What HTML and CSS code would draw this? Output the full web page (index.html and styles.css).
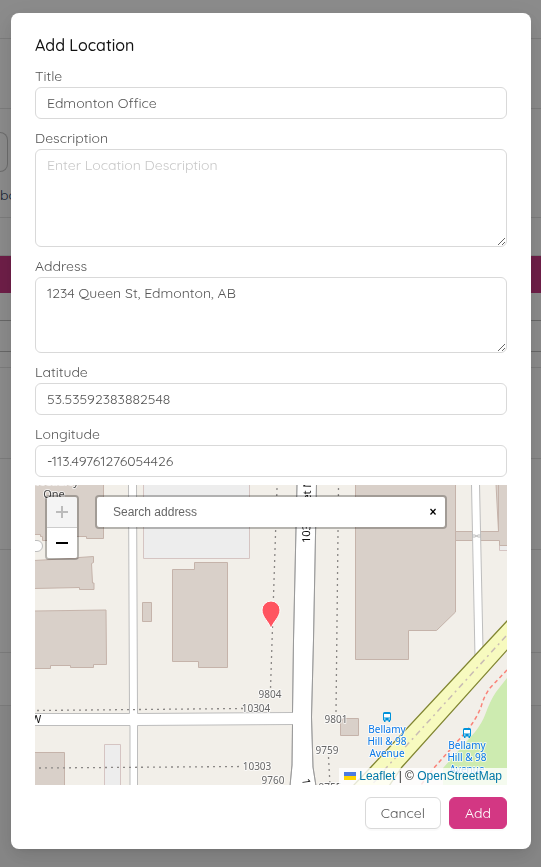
FILE: index.html
```html
<!DOCTYPE html>
<html lang="en">
<head>
<meta charset="utf-8">
<meta name="viewport" content="width=device-width, initial-scale=1">
<title>Add Location</title>
<link rel="stylesheet" href="styles.css">
</head>
<body>
<div class="page" aria-hidden="true">
  <div class="row row-header"></div>
  <div class="row row-toolbar"></div>
  <div class="row row-filter"><div class="page-box"></div><span class="page-link">bo</span></div>
  <div class="row row-gap"></div>
  <div class="row row-band"></div>
  <div class="row row-line"></div>
  <div class="row row-line"></div>
  <div class="row row-thin"></div>
  <div class="row row-item"></div>
  <div class="row row-item"></div>
  <div class="row row-tall"></div>
  <div class="row row-last"></div>
</div>
<div class="overlay">
  <form class="modal" role="dialog" aria-labelledby="heading">
    <h1 class="heading" id="heading">Add Location</h1>
    <div class="field">
      <label for="title">Title</label>
      <input class="control" id="title" type="text" value="Edmonton Office">
    </div>
    <div class="field">
      <label for="description">Description</label>
      <textarea class="control" id="description" rows="4" placeholder="Enter Location Description"></textarea>
    </div>
    <div class="field">
      <label for="address">Address</label>
      <textarea class="control" id="address" rows="3">1234 Queen St, Edmonton, AB</textarea>
    </div>
    <div class="field">
      <label for="latitude">Latitude</label>
      <input class="control" id="latitude" type="text" value="53.53592383882548">
    </div>
    <div class="field">
      <label for="longitude">Longitude</label>
      <input class="control" id="longitude" type="text" value="-113.49761276054426">
    </div>
    <div class="map">
      <svg class="tiles" viewBox="0 0 472 300" preserveAspectRatio="xMidYMid slice">
        <rect width="472" height="300" fill="#f2efe9"/>
        <path d="M408 300L408 283L418 272L440 247Q447 238 450 230Q455 216 461 207L472 193V300Z" fill="#cdebb0"/>
        <g fill="#ededed" stroke="#d5c4c2">
          <path d="M108.500-1V73.500H214.500V-1M69.500 301V259.500H85.500V301M464.500 60.500H473V65.500H464.500Z"/>
        </g>
        <g fill="#d9d0c9" stroke="#c5b3aa">
          <path d="M-1-1H68.500V53.500H51.500V51.500H30V55.500H7.500V51.500H5.500V49.500H-1Z"/>
          <path d="M-1 75.500L44 73V72.500L58.500 71.500V77.500L56.500 78.500L57.500 98H59V104.500H44.500V102.500L-1 103.500Z"/>
          <path d="M-1 126L71 125L71.500 179.500H58.500V182.500H35.500V180.500H15.500V183.500H-1Z"/>
          <path d="M107.500 117.500H116.500V136.500H107.500Z"/>
          <path d="M137.500 84.500H159.500V77.500H192.500V182.500H163.500V176.500H137.500Z"/>
          <path d="M320.500-1H420.500V127L401.500 145.500H373.500V174.500H320.500Z"/>
          <path d="M-1 267.500H29.500V301H-1ZM308 235V233.500H323.500V250.500H305.500V235Z"/>
          <path d="M420.500 46.500H463.500L461-1H473V60.500H464.500V55.500H420.500Z"/>
        </g>
        <path d="M463.500-1V46.500" stroke="#c5b3aa"/>
        <g fill="#fff" stroke="#bdbdbd">
          <path d="M-5 55.500H2a5.500 5.500 0 0 1 0 11H-5Z"/>
          <path d="M93.500-1L94.500 228.500H-1V240.500H95V301H102.500V240.500L257.500 239.500L257 280L255 301H281L278 282L276.500 232L278.500 155L281.500-1H262L258.500 155L257.500 227.500L102.500 228.500L101.500-1Z"/>
          <path d="M436.500-1L440 172L448 164L444.500-1Z"/>
        </g>
        <path d="M262-1L258.500 155L257.500 227.500M257.500 239.500L257 280L255 301M281.500-1L278.500 155L276.500 232L278 282L281 301" fill="none" stroke="#999"/>
        <path d="M437 52H440l3-2h3M437 50h3l3 2h3" fill="none" stroke="#bbb"/>
        <path d="M318 301L336 282L473 135V164L367 282L354 301Z" fill="#f7fabf"/>
        <path d="M318 301L336 282L473 135M473 164L367 282L354 301" fill="none" stroke="#808531" stroke-width="1.300"/>
        <path d="M471 151L352 282L336 301" fill="none" stroke="#c9bcb4" stroke-width="1.500" stroke-dasharray="6 4 2 4"/>
        <path d="M472 185L455 203Q449 211 446 222Q441 235 430 248L398 284L386 300" fill="none" stroke="#fa8278" stroke-width="1.500" stroke-dasharray="4 3"/>
        <g fill="none" stroke="#8a8785" stroke-width="1.300" stroke-dasharray="2 4">
          <path d="M242 3L235.500 204M303.500 3L301 228M2 225.500L208 223.500M4 283L206 281.500M293.500 272L295 300"/>
        </g>
        <g class="house">
          <text x="235" y="213">9804</text><text x="221" y="227">10304</text>
          <text x="222" y="285">10303</text><text x="238" y="299">9760</text>
          <text x="301" y="238">9801</text><text x="292" y="269">9759</text>
          <text x="295" y="306">9755</text>
        </g>
        <g class="place"><text x="19" y="0">McCauley</text><text x="19" y="13">One</text></g>
        <g class="street">
          <text transform="translate(275 58) rotate(-89)">103 Street NW</text>
          <text x="-4" y="238">W</text>
          <text transform="translate(267 294) rotate(82)">103 Street</text>
        </g>
        <g class="stop">
          <text x="352" y="248">Bellamy</text><text x="352" y="260">Hill &amp; 98</text><text x="352" y="272">Avenue</text>
          <text x="432" y="264">Bellamy</text><text x="432" y="276">Hill &amp; 98</text><text x="432" y="288">Avenue</text>
        </g>
        <defs>
          <g id="bus"><path d="M1.500 0H6.500Q8 0 8 1.500V8.500H7V10H5.500V8.500H2.500V10H1V8.500H0V1.500Q0 0 1.500 0Z" fill="#0092da"/><path d="M1 2H7V5.500H1Z" fill="#fff"/><path d="M1 6.500H2.500V7.500H1ZM5.500 6.500H7V7.500H5.500Z" fill="#fff"/></g>
        </defs>
        <use href="#bus" x="348" y="227"/><use href="#bus" x="428" y="243"/>
        <path d="M236 144C234.500 137 227 132.500 227 125a9 9 0 0 1 18 0C245 132.500 237.500 137 236 144Z" fill="#ff5460" stroke="#fff" stroke-width="1"/>
      </svg>
      <div class="zoom">
        <button type="button" disabled aria-label="Zoom in"><svg width="14" height="14"><path d="M1 7H13M7 1V13" stroke="#bbb" stroke-width="2"/></svg></button>
        <button type="button" aria-label="Zoom out"><svg width="14" height="14"><path d="M1 7H13" stroke="#000" stroke-width="2"/></svg></button>
      </div>
      <div class="search">
        <input type="text" placeholder="Search address" aria-label="Search address">
        <button type="button" aria-label="Clear search">×</button>
      </div>
      <div class="credit">
        <a href="#leaflet"><svg width="12" height="8"><path d="M0 0H12V4H0Z" fill="#4c7be1"/><path d="M0 4H12V8H0Z" fill="#ffd500"/></svg> Leaflet</a> | © <a href="#osm">OpenStreetMap</a>
      </div>
    </div>
    <div class="actions">
      <button class="button" type="button">Cancel</button>
      <button class="button primary" type="submit">Add</button>
    </div>
  </form>
</div>
</body>
</html>
```
FILE: styles.css
```css
* { box-sizing: border-box; }
body { margin: 0; font-family: Quicksand, Lato, sans-serif; font-size: 14px; line-height: 22px; color: #555; background: #f5f5f5; overflow: hidden; }
.row { border-bottom: 1px solid #e2e2e2; background: #fdfdfd; }
.row-header { height: 39px; }
.row-toolbar { height: 70px; }
.row-filter { height: 109px; padding-top: 23px; }
.page-box { width: 8px; height: 40px; border: 1px solid #c4c4c4; border-left: 0; border-radius: 0 8px 8px 0; }
.page-link { display: block; margin-top: 12px; color: #1d3a5c; }
.row-gap { height: 38px; }
.row-band { height: 37px; background: #c83782; border: 0; }
.row-line { height: 28px; border-color: #bbb; }
.row-line + .row-line { height: 31px; }
.row-thin { height: 16px; }
.row-item { height: 91px; }
.row-tall { height: 103px; }
.row-last { height: 53px; }

.overlay { position: fixed; inset: 0; display: flex; justify-content: center; align-items: flex-start; padding: 13px 10px 13px 11px; background: rgba(0, 0, 0, .45); overflow: hidden; }
.modal { width: 100%; max-width: 520px; padding: 20px 24px; border-radius: 8px; background: #fff; box-shadow: 0 6px 16px rgba(0, 0, 0, .08), 0 3px 6px -4px rgba(0, 0, 0, .12), 0 9px 28px 8px rgba(0, 0, 0, .05); }
.heading { margin: 0 0 8px; font-size: 16px; line-height: 24px; font-weight: 500; color: #111; }
.field { margin-bottom: 8px; }
.field label { display: block; }
.control { display: block; width: 100%; padding: 4px 11px; border: 1px solid #d9d9d9; border-radius: 6px; background: #fff; font: inherit; color: #555; resize: vertical; }
input.control { height: 32px; }
.control::placeholder { color: #c8c8c8; }

.map { position: relative; height: 300px; overflow: hidden; background: #f2efe9; }
.tiles { display: block; width: 100%; height: 100%; font-family: "Noto Sans", sans-serif; }
.tiles text { paint-order: stroke; stroke: rgba(255, 255, 255, .7); stroke-width: 2px; stroke-linejoin: round; }
.house { font-size: 10px; fill: #666; text-anchor: middle; }
.place { font-size: 11px; fill: #444; text-anchor: middle; }
.street { font-size: 11px; fill: #111; }
.stop { font-size: 10px; fill: #0a78e8; text-anchor: middle; }
.zoom { position: absolute; top: 10px; left: 10px; border: 2px solid rgba(0, 0, 0, .25); border-radius: 4px; background-clip: padding-box; }
.zoom button { display: flex; align-items: center; justify-content: center; width: 30px; height: 30px; padding: 0; border: 0; background: #fff; border-radius: 0 0 2px 2px; }
.zoom button:disabled { height: 31px; background: #f4f4f4; border-bottom: 1px solid #ccc; border-radius: 2px 2px 0 0; }
.search { position: absolute; top: 10px; left: 60px; right: 60px; display: flex; align-items: center; height: 34px; border: 2px solid rgba(0, 0, 0, .25); border-radius: 4px; background: #fff; background-clip: padding-box; }
.search input { flex: 1; min-width: 0; padding: 0 16px; border: 0; background: none; font: 12px "Liberation Sans", sans-serif; }
.search input::placeholder { color: #666; }
.search button { width: 24px; padding: 0; border: 0; background: none; font: bold 12px "Liberation Sans", sans-serif; color: #000; }
.credit { position: absolute; right: 0; bottom: 0; padding: 0 5px; background: rgba(255, 255, 255, .8); font: 12px/17px "Liberation Sans", sans-serif; color: #333; }
.credit a { color: #0078a8; text-decoration: none; }
.actions { display: flex; justify-content: flex-end; gap: 8px; margin-top: 12px; }
.button { height: 32px; padding: 0 15px; border: 1px solid #d9d9d9; border-radius: 6px; background: #fff; font: inherit; color: #555; box-shadow: 0 2px 0 rgba(0, 0, 0, .02); }
.primary { border-color: #d33783; background: #d33783; color: #fff; }
```
